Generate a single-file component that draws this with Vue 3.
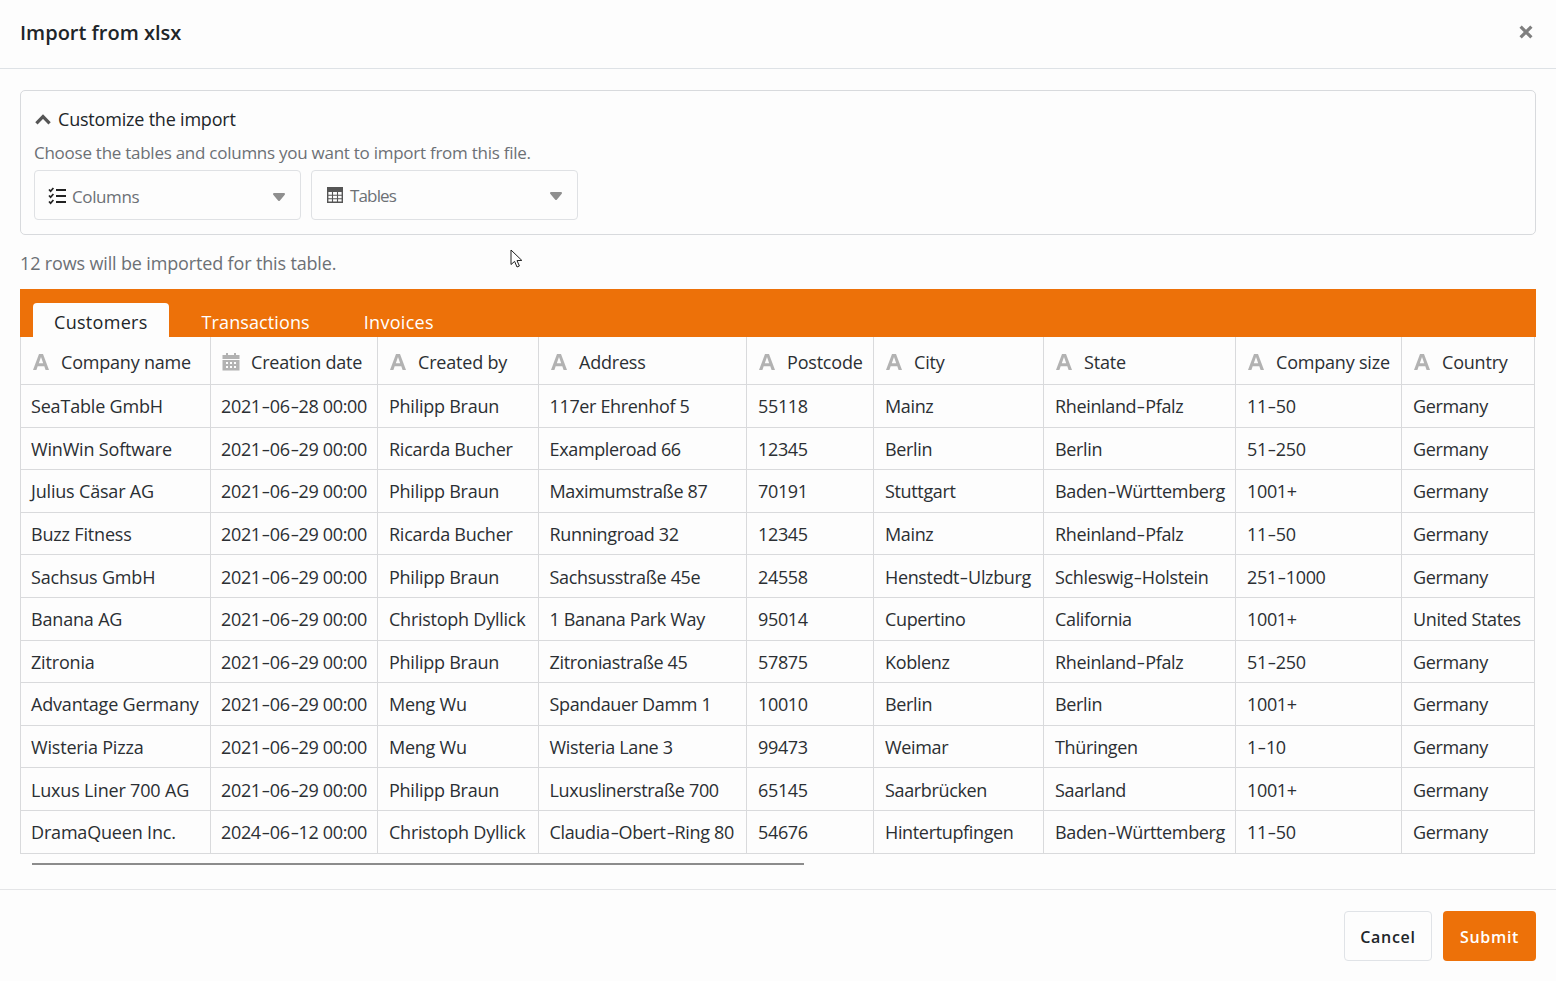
<script setup>
const columns = [
  { name: 'Company name', w: 190, icon: 'a' },
  { name: 'Creation date', w: 167, icon: 'cal' },
  { name: 'Created by', w: 161, icon: 'a' },
  { name: 'Address', w: 208, icon: 'a' },
  { name: 'Postcode', w: 127, icon: 'a' },
  { name: 'City', w: 170, icon: 'a' },
  { name: 'State', w: 192, icon: 'a' },
  { name: 'Company size', w: 166, icon: 'a' },
  { name: 'Country', w: 133, icon: 'a' }
]
const rows = [
  ['SeaTable GmbH', '2021-06-28 00:00', 'Philipp Braun', '117er Ehrenhof 5', '55118', 'Mainz', 'Rheinland-Pfalz', '11-50', 'Germany'],
  ['WinWin Software', '2021-06-29 00:00', 'Ricarda Bucher', 'Exampleroad 66', '12345', 'Berlin', 'Berlin', '51-250', 'Germany'],
  ['Julius Cäsar AG', '2021-06-29 00:00', 'Philipp Braun', 'Maximumstraße 87', '70191', 'Stuttgart', 'Baden-Württemberg', '1001+', 'Germany'],
  ['Buzz Fitness', '2021-06-29 00:00', 'Ricarda Bucher', 'Runningroad 32', '12345', 'Mainz', 'Rheinland-Pfalz', '11-50', 'Germany'],
  ['Sachsus GmbH', '2021-06-29 00:00', 'Philipp Braun', 'Sachsusstraße 45e', '24558', 'Henstedt-Ulzburg', 'Schleswig-Holstein', '251-1000', 'Germany'],
  ['Banana AG', '2021-06-29 00:00', 'Christoph Dyllick', '1 Banana Park Way', '95014', 'Cupertino', 'California', '1001+', 'United States'],
  ['Zitronia', '2021-06-29 00:00', 'Philipp Braun', 'Zitroniastraße 45', '57875', 'Koblenz', 'Rheinland-Pfalz', '51-250', 'Germany'],
  ['Advantage Germany', '2021-06-29 00:00', 'Meng Wu', 'Spandauer Damm 1', '10010', 'Berlin', 'Berlin', '1001+', 'Germany'],
  ['Wisteria Pizza', '2021-06-29 00:00', 'Meng Wu', 'Wisteria Lane 3', '99473', 'Weimar', 'Thüringen', '1-10', 'Germany'],
  ['Luxus Liner 700 AG', '2021-06-29 00:00', 'Philipp Braun', 'Luxuslinerstraße 700', '65145', 'Saarbrücken', 'Saarland', '1001+', 'Germany'],
  ['DramaQueen Inc.', '2024-06-12 00:00', 'Christoph Dyllick', 'Claudia-Obert-Ring 80', '54676', 'Hintertupfingen', 'Baden-Württemberg', '11-50', 'Germany']
]
const parts = (v) => v.split(/(-)/)
</script>

<template>
  <div class="dialog">
    <header class="head">
      <h1 class="title">Import from xlsx</h1>
      <svg class="close" viewBox="0 0 14 14" width="14" height="14" aria-hidden="true">
        <path d="M1.6 1.6 L12.4 12.4 M12.4 1.6 L1.6 12.4" stroke="#7f7f7f" stroke-width="3.2" fill="none" />
      </svg>
    </header>

    <main class="body">
      <section class="card">
        <div class="card-title">
          <svg viewBox="0 0 16 11" width="16" height="11" aria-hidden="true">
            <path d="M1.4 9.4 L8 2.6 L14.6 9.4" stroke="#555" stroke-width="3.2" fill="none" />
          </svg>
          <span>Customize the import</span>
        </div>
        <p class="hint">Choose the tables and columns you want to import from this file.</p>
        <div class="selects">
          <div class="select">
            <svg viewBox="0 0 18 18" width="18" height="18" aria-hidden="true">
              <path d="M1 2.5 L2.6 4.2 L5.4 1 M1 8.5 L2.6 10.2 L5.4 7 M1 14.5 L2.6 16.2 L5.4 13" stroke="#222" stroke-width="1.7" fill="none" />
              <path d="M8 3 H18 M8 9 H18 M8 15 H18" stroke="#222" stroke-width="1.8" fill="none" />
            </svg>
            <span class="select-label">Columns</span>
            <svg class="caret" viewBox="0 0 14 10" width="14" height="10" aria-hidden="true">
              <path d="M2 2 H12 L7 8 Z" fill="#8f8f8f" stroke="#8f8f8f" stroke-width="2" stroke-linejoin="round" />
            </svg>
          </div>
          <div class="select select-tables">
            <svg viewBox="0 0 16 16" width="16" height="16" aria-hidden="true">
              <path d="M0.7 0.7 H15.3 V15.3 H0.7 Z" stroke="#555" stroke-width="1.4" fill="none" />
              <path d="M0.7 1 H15.3 V5 H0.7 Z" fill="#555" />
              <path d="M0.7 8.2 H15.3 M0.7 11.8 H15.3 M5.5 5 V15 M10.5 5 V15" stroke="#555" stroke-width="1.1" fill="none" />
            </svg>
            <span class="select-label">Tables</span>
            <svg class="caret" viewBox="0 0 14 10" width="14" height="10" aria-hidden="true">
              <path d="M2 2 H12 L7 8 Z" fill="#8f8f8f" stroke="#8f8f8f" stroke-width="2" stroke-linejoin="round" />
            </svg>
          </div>
        </div>
      </section>

      <p class="count">12 rows will be imported for this table.</p>

      <div class="tabs">
        <div class="tab active">Customers</div>
        <div class="tab">Transactions</div>
        <div class="tab">Invoices</div>
      </div>

      <table class="grid">
        <colgroup>
          <col v-for="c in columns" :key="c.name" :style="{ width: c.w + 'px' }" />
        </colgroup>
        <thead>
          <tr>
            <th v-for="c in columns" :key="c.name">
              <div class="th-inner">
                <svg v-if="c.icon === 'a'" viewBox="0 0 16 18" width="16" height="18" aria-hidden="true">
                  <path d="M0 17 L6 1 H10 L16 17 H12.6 L11.3 13.2 H4.7 L3.4 17 Z M5.8 10.2 H10.2 L8 4 Z" fill="#b2b2b2" fill-rule="evenodd" />
                </svg>
                <svg v-else class="cal" viewBox="0 0 18 18" width="18" height="18" aria-hidden="true">
                  <path d="M4 0 H6 V2 H12 V0 H14 V2 H17.5 V6 H0.5 V2 H4 Z" fill="#b2b2b2" />
                  <path fill-rule="evenodd" d="M0.5 7 H17.5 V17.5 H0.5 Z M4 9 V11 H6 V9 Z M8 9 V11 H10 V9 Z M12 9 V11 H14 V9 Z M4 13 V15 H6 V13 Z M8 13 V15 H10 V13 Z M12 13 V15 H14 V13 Z" fill="#b2b2b2" />
                </svg>
                <span>{{ c.name }}</span>
              </div>
            </th>
          </tr>
        </thead>
        <tbody>
          <tr v-for="(r, i) in rows" :key="i">
            <td v-for="(v, j) in r" :key="j"><template v-for="(p, k) in parts(v)" :key="k"><span v-if="p === '-'" class="hy">-</span><template v-else>{{ p }}</template></template></td>
          </tr>
        </tbody>
      </table>

      <div class="scrollbar"></div>
    </main>

    <footer class="foot">
      <button class="btn cancel">Cancel</button>
      <button class="btn submit">Submit</button>
    </footer>

    <svg class="cursor" viewBox="0 0 14 20" width="14" height="20" aria-hidden="true">
      <path d="M1 1 V15.5 L4.6 12.4 L7 18 L9.4 17 L7 11.6 L11.8 11.4 Z" fill="#fff" stroke="#222" stroke-width="1" />
    </svg>
  </div>
</template>

<style>
html, body { margin: 0; background: #fdfdfd; }
</style>

<style scoped>
.dialog {
  position: relative;
  width: 1556px;
  height: 981px;
  background: #fdfdfd;
  font-family: "Open Sans", "Noto Sans", sans-serif;
  color: #212529;
  overflow: hidden;
}
.head {
  height: 69px;
  box-sizing: border-box;
  border-bottom: 1px solid #dee2e6;
  display: flex;
  align-items: center;
  justify-content: space-between;
  padding: 0 23px 4px 20px;
}
.title {
  margin: 0;
  font-size: 20px;
  font-weight: 600;
  letter-spacing: 0;
}
.close { margin-bottom: 1px; }
.body { padding: 21px 20px 0; height: 820px; box-sizing: border-box; }
.card {
  height: 145px;
  box-sizing: border-box;
  border: 1px solid #d8dadd;
  border-radius: 5px;
  padding: 14px 13px;
}
.card-title {
  display: flex;
  align-items: center;
  gap: 7px;
  font-size: 18px;
  line-height: 28px;
  letter-spacing: -0.2px;
  padding-left: 1px;
}
.hint {
  margin: 8px 0 5px;
  font-size: 17px;
  line-height: 24px;
  color: #6c7075;
  letter-spacing: -0.26px;
}
.selects { display: flex; gap: 10px; }
.select {
  width: 267px;
  height: 50px;
  box-sizing: border-box;
  border: 1px solid #dfe1e4;
  border-radius: 4px;
  display: flex;
  align-items: center;
  padding: 2px 14px 0 13px;
  color: #6c7075;
}
.select-tables { padding: 0 14px 0 15px; }
.select-label {
  flex: 1;
  margin-left: 6px;
  font-size: 17px;
  letter-spacing: -0.4px;
}
.select-tables .select-label { margin-left: 7px; letter-spacing: -0.85px; }
.caret { margin-top: 2px; }
.count {
  margin: 15px 0 13px;
  font-size: 18px;
  line-height: 26px;
  color: #6c7075;
  letter-spacing: -0.15px;
}
.tabs {
  height: 48px;
  box-sizing: border-box;
  background: #ed7109;
  display: flex;
  align-items: flex-end;
  gap: 12px;
  padding-left: 13px;
}
.tab {
  height: 34px;
  line-height: 38px;
  padding: 0 21px;
  font-size: 18px;
  color: #fff;
  letter-spacing: 0.3px;
  border-radius: 4px 4px 0 0;
}
.tab:nth-child(2) { letter-spacing: 0.1px; }
.tab.active { background: #fdfdfd; color: #212529; }
.grid {
  width: 1514px;
  table-layout: fixed;
  border-collapse: collapse;
  font-size: 18px;
  letter-spacing: -0.35px;
  color: #2b2f33;
}
.grid th, .grid td {
  border: 1px solid #d9dadc;
  padding: 0 10px 0 11px;
  white-space: nowrap;
  overflow: hidden;
  text-align: left;
  font-weight: 400;
}
.grid td:first-child { padding-left: 10px; letter-spacing: -0.18px; }
.grid td:nth-child(2) { padding-left: 10px; }
.grid td:nth-child(4) { padding-left: 10.5px; }
.grid td:nth-child(3) { letter-spacing: -0.25px; }
.grid th { letter-spacing: -0.2px; }
.grid thead th { height: 45px; border-top: 0; padding-top: 2px; padding-left: 10px; }
.grid tbody td { height: 42.6px; box-sizing: border-box; padding-top: 1px; }
.hy { display: inline-block; padding: 0 1.75px; transform: scaleX(1.5); }
.th-inner {
  display: flex;
  align-items: center;
  gap: 12px;
  padding-left: 2px;
}
.th-inner svg { flex: none; }
.th-inner .cal { margin: 0 -1px 0 -1px; }
.scrollbar {
  margin: 9px 0 0 12px;
  width: 772px;
  height: 2px;
  background: #8c8c8c;
}
.foot {
  height: 92px;
  box-sizing: border-box;
  border-top: 1px solid #e4e5e7;
  display: flex;
  justify-content: flex-end;
  align-items: flex-start;
  gap: 11px;
  padding: 21px 20px 0 0;
}
.btn {
  height: 50px;
  border-radius: 4px;
  font-family: inherit;
  font-size: 16px;
  font-weight: 600;
  padding: 2px 0 0;
  letter-spacing: 0.7px;
}
.cancel { width: 88px; background: #fdfdfd; border: 1px solid #e0e3e7; color: #212529; }
.submit { width: 93px; background: #ed7109; border: 0; color: #fff; }
.cursor { position: absolute; left: 510px; top: 249px; }
</style>
